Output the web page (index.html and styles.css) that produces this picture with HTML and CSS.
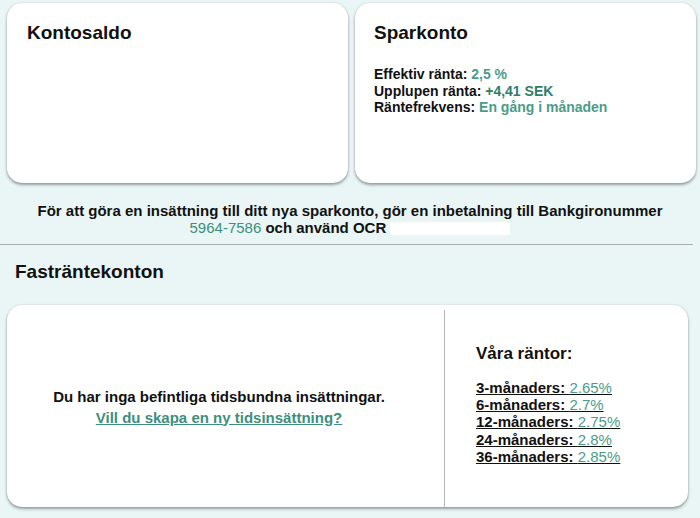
FILE: index.html
```html
<!DOCTYPE html>
<html lang="sv">
<head>
<meta charset="utf-8">
<link rel="stylesheet" href="styles.css">
</head>
<body>
<div class="top-row">
  <section class="card">
    <h2 class="card-title">Kontosaldo</h2>
  </section>
  <section class="card">
    <h2 class="card-title">Sparkonto</h2>
    <div class="info">
      <div>Effektiv ränta: <span class="val light">2,5 %</span></div>
      <div>Upplupen ränta: <span class="val dark">+4,41 SEK</span></div>
      <div>Räntefrekvens: <span class="val light">En gång i månaden</span></div>
    </div>
  </section>
</div>
<p class="notice">För att göra en insättning till ditt nya sparkonto, gör en inbetalning till Bankgironummer<br><span class="val dark">5964-7586</span> och använd OCR <span class="ocr"></span></p>
<hr class="rule">
<h2 class="section-title">Fasträntekonton</h2>
<section class="card fixed">
  <div class="empty">
    <div class="empty-text">Du har inga befintliga tidsbundna insättningar.</div>
    <a class="create" href="#">Vill du skapa en ny tidsinsättning?</a>
  </div>
  <div class="rates">
    <h3 class="rates-title">Våra räntor:</h3>
    <ul class="rate-list">
      <li>3-månaders: <span class="num">2.65%</span></li>
      <li>6-månaders: <span class="num">2.7%</span></li>
      <li>12-månaders: <span class="num">2.75%</span></li>
      <li>24-månaders: <span class="num">2.8%</span></li>
      <li>36-månaders: <span class="num">2.85%</span></li>
    </ul>
  </div>
</section>
</body>
</html>
```
FILE: styles.css
```css
html, body {
  margin: 0;
  padding: 0;
}
body {
  background: #eaf6f6;
  font-family: "Liberation Sans", Arial, sans-serif;
  color: #111;
  width: 700px;
  height: 518px;
  overflow: hidden;
}
.top-row {
  display: grid;
  grid-template-columns: 341px 341px;
  gap: 7px;
  padding: 3px 4px 0 7px;
}
.card {
  background: #fff;
  border-radius: 15px;
  box-shadow: 0 2px 3px rgba(60, 80, 80, 0.5), 0 0 2px rgba(60, 80, 80, 0.2);
  height: 180px;
  box-sizing: border-box;
  padding: 19px 19px;
}
.card-title {
  margin: 0;
  font-size: 19px;
  font-weight: bold;
  line-height: 22px;
}
.top-row .card:first-child .card-title {
  padding-left: 1px;
}
.info {
  margin-top: 22px;
  font-size: 14px;
  font-weight: bold;
  line-height: 16.5px;
}
.val.light {
  color: #4a9c88;
}
.val.dark {
  color: #2e7e6a;
}
.notice {
  margin: 19px 0 0;
  text-align: center;
  font-size: 15px;
  font-weight: bold;
  line-height: 17px;
  padding-left: 0;
}
.notice .val.dark {
  font-weight: normal;
  color: #3d8f7c;
}
.ocr {
  display: inline-block;
  width: 120px;
  height: 13px;
  background: #fff;
  vertical-align: -2px;
}
.rule {
  margin: 8px 7px 0 0;
  border: 0;
  border-top: 1px solid #a9adad;
}
.section-title {
  margin: 17px 0 0 15px;
  font-size: 19px;
  font-weight: bold;
  line-height: 20px;
}
.card.fixed {
  margin: 23px 12px 0 7px;
  height: 202px;
  padding: 5px 0 0;
  display: grid;
  grid-template-columns: 438px 1fr;
}
.empty {
  border-right: 1px solid #b3b6b6;
  display: flex;
  flex-direction: column;
  align-items: center;
  justify-content: center;
  font-size: 15px;
  font-weight: bold;
  line-height: 21px;
  padding: 0 13px 4px 0;
}
.create {
  color: #3d8f7c;
  text-decoration: underline;
}
.rates {
  padding: 34px 0 0 31px;
}
.rates-title {
  margin: 0;
  font-size: 17px;
  font-weight: bold;
  line-height: 20px;
}
.rate-list {
  list-style: none;
  margin: 15px 0 0;
  padding: 0;
  font-size: 15px;
  font-weight: bold;
  line-height: 17.2px;
}
.rate-list li {
  text-decoration: underline;
}
.rate-list .num {
  color: #4a9c88;
  font-weight: normal;
}
```
